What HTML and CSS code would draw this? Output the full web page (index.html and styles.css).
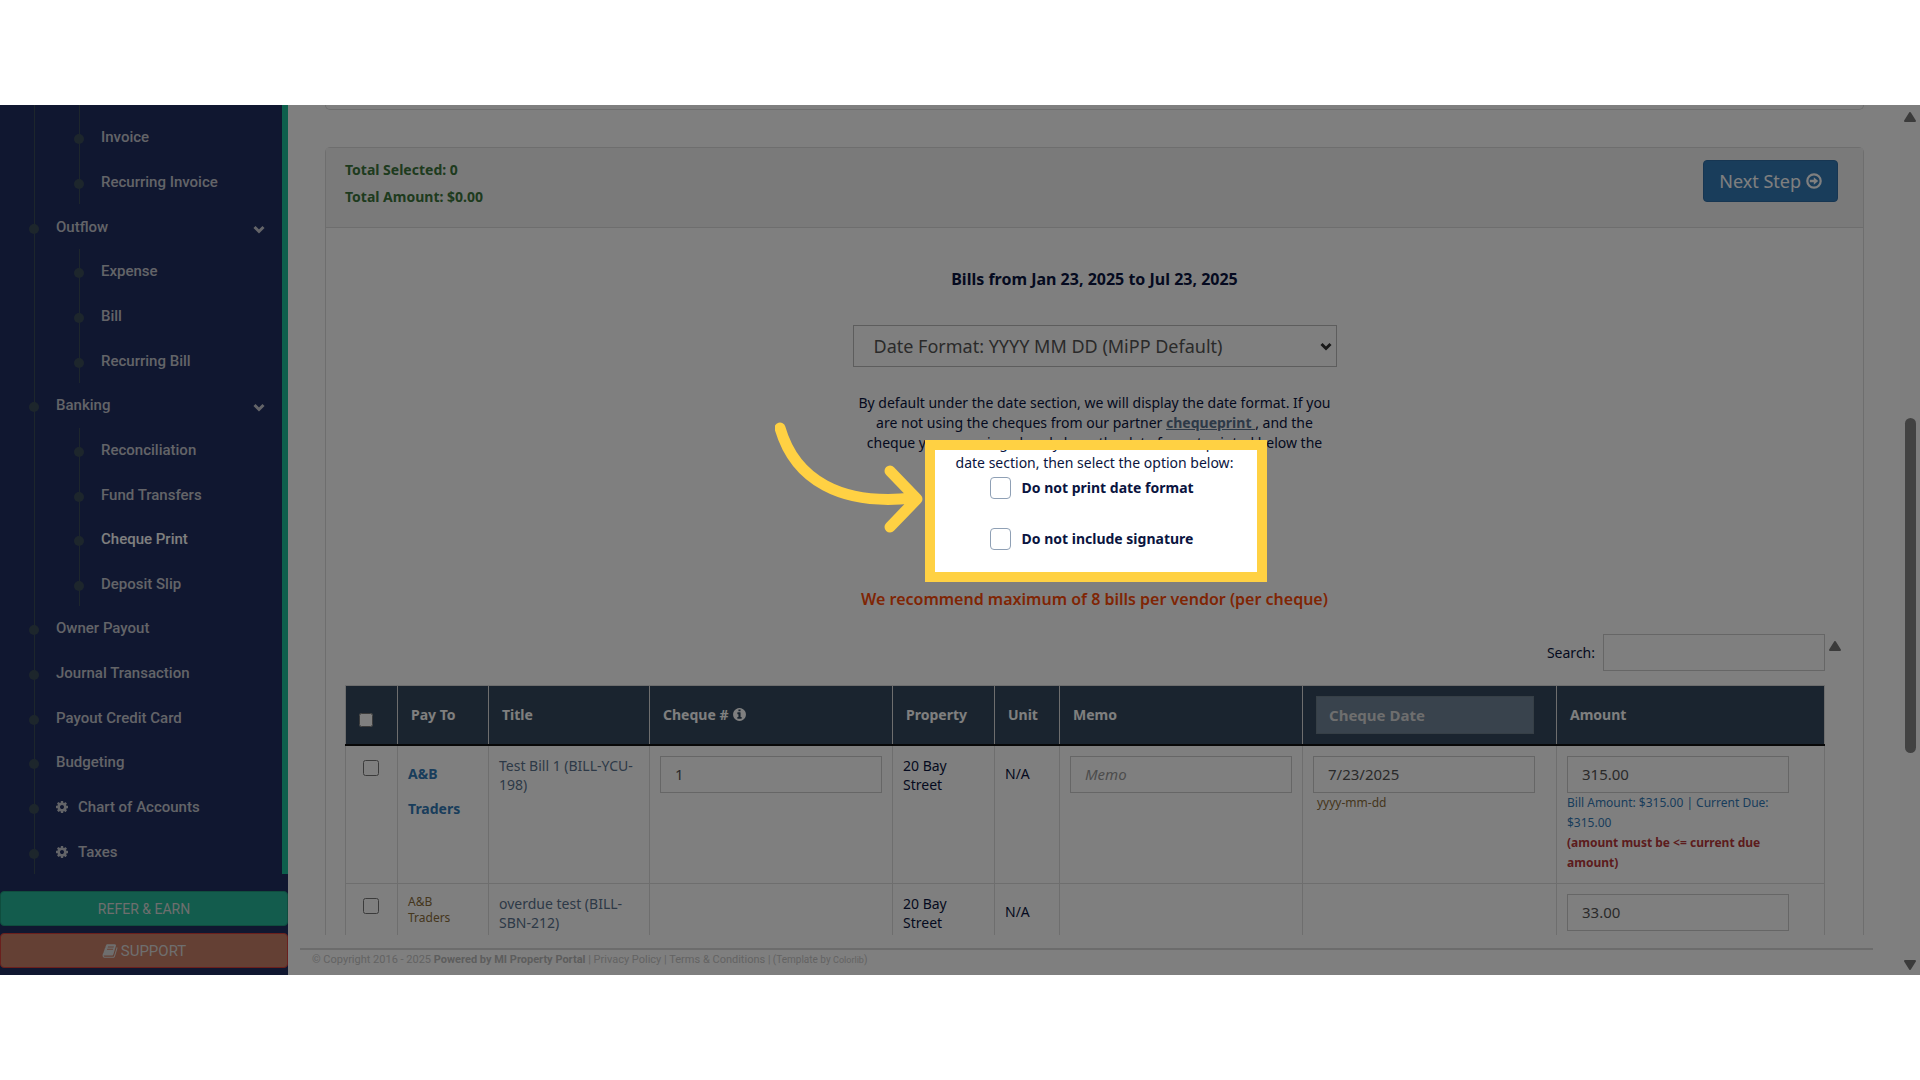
FILE: index.html
```html
<!DOCTYPE html>
<html lang="en">
<head>
<meta charset="utf-8">
<title>Cheque Print</title>
<link rel="stylesheet" href="styles.css">
</head>
<body>
<svg class="sprite" aria-hidden="true">
  <symbol id="cog" viewBox="0 0 1792 1792"><path d="M1152 896q0-106-75-181t-181-75-181 75-75 181 75 181 181 75 181-75 75-181zm512-109v222q0 12-8 23t-20 13l-185 28q-19 54-39 91 35 50 107 138 10 12 10 25t-9 23q-27 37-99 108t-94 71q-12 0-26-9l-138-108q-44 23-91 38-16 136-29 186-7 28-36 28h-222q-14 0-24.5-8.5t-11.5-21.5l-28-184q-49-16-90-37l-141 107q-10 9-25 9-14 0-25-11-126-114-165-168-7-10-7-23 0-12 8-23 15-21 51-66.5t54-70.5q-27-50-41-99l-183-27q-13-2-21-12.5t-8-23.5v-222q0-12 8-23t19-13l186-28q14-46 39-92-40-57-107-138-10-12-10-24 0-10 9-23 26-36 98.5-107.5t94.5-71.5q13 0 26 10l138 107q44-23 91-38 16-136 29-186 7-28 36-28h222q14 0 24.5 8.5t11.5 21.5l28 184q49 16 90 37l142-107q9-9 24-9 13 0 25 10 129 119 165 170 7 8 7 22 0 12-8 23-15 21-51 66.5t-54 70.5q26 50 41 98l183 28q13 2 21 12.5t8 23.5z"/></symbol>
  <symbol id="chevron" viewBox="0 0 14 14"><path d="M2.5 5l4.5 4.5L11.500 5" fill="none" stroke="currentColor" stroke-width="3"/></symbol>
</svg>
<div class="app">
  <aside class="sidebar">
    <nav class="menu">
      <ul class="menu-list">
        <li class="group two"><ul class="sub">
          <li><a href="#">Invoice</a></li>
          <li><a href="#">Recurring Invoice</a></li>
        </ul></li>
        <li class="item"><a href="#">Outflow <svg class="chev"><use href="#chevron"/></svg></a></li>
        <li class="group three"><ul class="sub">
          <li><a href="#">Expense</a></li>
          <li><a href="#">Bill</a></li>
          <li><a href="#">Recurring Bill</a></li>
        </ul></li>
        <li class="item"><a href="#">Banking <svg class="chev"><use href="#chevron"/></svg></a></li>
        <li class="group four"><ul class="sub">
          <li><a href="#">Reconciliation</a></li>
          <li><a href="#">Fund Transfers</a></li>
          <li><a class="current" href="#">Cheque Print</a></li>
          <li><a href="#">Deposit Slip</a></li>
        </ul></li>
        <li class="item"><a href="#">Owner Payout</a></li>
        <li class="item"><a href="#">Journal Transaction</a></li>
        <li class="item"><a href="#">Payout Credit Card</a></li>
        <li class="item"><a href="#">Budgeting</a></li>
        <li class="item"><a href="#"><svg class="cog"><use href="#cog"/></svg>Chart of Accounts</a></li>
        <li class="item"><a href="#"><svg class="cog"><use href="#cog"/></svg>Taxes</a></li>
      </ul>
    </nav>
    <div class="side-actions">
      <button class="side-btn refer" type="button">REFER &amp; EARN</button>
      <button class="side-btn support" type="button"><svg class="book" viewBox="0 0 1792 1792"><path d="M1703 478q40 57 18 129l-275 906q-19 64-76.5 107.500t-122.500 43.500h-923q-77 0-148.500-53.500t-99.500-131.500q-24-67-2-127 0-4 3-27t4-37q1-8-3-21.500t-3-19.500q2-11 8-21t16.500-23.500 16.500-23.500q23-38 45-91.500t30-91.500q3-10 .5-30t-.5-28q3-11 17-28t17-23q21-36 42-92t25-90q1-9-2.500-32t.5-28q4-13 22-30.500t22-22.500q19-26 42.500-84.500t27.500-96.500q1-8-3-25.500t-2-26.500q2-8 9-18t18-23 17-21q8-12 16.500-30.500t15-35 16-36 19.500-32 26.500-23.500 36-11.500 47.500 5.500l-1 3q38-9 51-9h761q74 0 114 56t18 130l-274 906q-36 119-71.500 153.500t-128.500 34.500h-869q-27 0-38 15-11 16-1 43 24 70 144 70h923q29 0 56-15.500t35-41.500l300-987q7-22 5-57 38 15 59 43zm-1064 2q-4 13 2 22.500t20 9.500h608q13 0 25.500-9.500t16.500-22.500l21-64q4-13-2-22.500t-20-9.500h-608q-13 0-25.500 9.500t-16.500 22.500zm-83 256q-4 13 2 22.500t20 9.500h608q13 0 25.500-9.500t16.500-22.500l21-64q4-13-2-22.500t-20-9.500h-608q-13 0-25.500 9.500t-16.500 22.500z"/></svg>SUPPORT</button>
    </div>
  </aside>

  <main class="main">
    <div class="content">
      <section class="panel panel-end"></section>
      <section class="panel">
        <header class="panel-head">
          <div class="totals">
            <div>Total Selected: 0</div>
            <div>Total Amount: $0.00</div>
          </div>
          <button class="next" type="button">Next Step
            <svg class="next-icon" viewBox="0 0 16 16"><circle cx="8" cy="8" r="6.700" fill="none" stroke="currentColor" stroke-width="2.200"/><path d="M3.800 6.800h4V4.200L12.200 8l-4.400 3.800V9.200h-4z"/></svg>
          </button>
        </header>
        <div class="panel-body">
          <h4 class="title">Bills from Jan 23, 2025 to Jul 23, 2025</h4>
          <div class="setup">
            <div class="select-wrap">
              <select class="format" aria-label="Date format"><option>Date Format: YYYY MM DD (MiPP Default)</option></select>
              <svg class="select-arrow"><use href="#chevron"/></svg>
            </div>
            <p class="hint">By default under the date section, we will display the date format. If you<br>are not using the cheques from our partner <a href="#">chequeprint </a>, and the<br>cheque you are using already have the date format printed below the<br>date section, then select the option below:</p>
            <label class="option"><input type="checkbox">Do not print date format</label>
            <label class="option"><input type="checkbox">Do not include signature</label>
          </div>
          <p class="advice">We recommend maximum of 8 bills per vendor (per cheque)</p>
          <div class="bills">
            <div class="bills-area">
              <div class="search"><label for="q">Search:</label><input class="field" id="q" type="text"></div>
              <table class="table">
                <colgroup><col class="c-check"><col class="c-pay"><col class="c-title"><col class="c-field"><col class="c-prop"><col class="c-unit"><col class="c-field"><col class="c-date"><col></colgroup>
                <thead>
                  <tr>
                    <th class="pick"><input type="checkbox" aria-label="Select all"></th>
                    <th>Pay To</th><th>Title</th>
                    <th>Cheque # <svg class="info" viewBox="0 0 1792 1792"><path d="M1152 1376v-160q0-14-9-23t-23-9h-96v-512q0-14-9-23t-23-9h-320q-14 0-23 9t-9 23v160q0 14 9 23t23 9h96v320h-96q-14 0-23 9t-9 23v160q0 14 9 23t23 9h448q14 0 23-9t9-23zm-128-896v-160q0-14-9-23t-23-9h-192q-14 0-23 9t-9 23v160q0 14 9 23t23 9h192q14 0 23-9t9-23zm640 416q0 209-103 385.500t-279.500 279.500-385.500 103-385.500-103-279.500-279.500-103-385.500 103-385.500 279.500-279.500 385.500-103 385.500 103 279.500 279.500 103 385.500z"/></svg></th>
                    <th>Property</th><th>Unit</th><th>Memo</th>
                    <th><input class="head-date" type="text" placeholder="Cheque Date" aria-label="Cheque Date"></th>
                    <th>Amount</th>
                  </tr>
                </thead>
                <tbody>
                  <tr>
                    <td class="pick"><input type="checkbox" aria-label="Select Test Bill 1"></td>
                    <td><a class="payee" href="#">A&amp;B Traders</a></td>
                    <td class="bill">Test Bill 1 (BILL-YCU-198)</td>
                    <td><input class="field" type="text" value="1" aria-label="Cheque number"></td>
                    <td>20 Bay Street</td>
                    <td class="unit">N/A</td>
                    <td><input class="field memo" type="text" placeholder="Memo" aria-label="Memo"></td>
                    <td><input class="field" type="text" value="7/23/2025" aria-label="Cheque date"><div class="note format-note">yyyy-mm-dd</div></td>
                    <td><input class="field" type="text" value="315.00" aria-label="Amount"><div class="note due">Bill Amount: $315.00 | Current Due: $315.00</div><div class="note limit">(amount must be &lt;= current due amount)</div></td>
                  </tr>
                  <tr>
                    <td class="pick"><input type="checkbox" aria-label="Select overdue test"></td>
                    <td><div class="payee-plain">A&amp;B<br>Traders</div></td>
                    <td class="bill">overdue test (BILL-SBN-212)</td>
                    <td></td>
                    <td>20 Bay Street</td>
                    <td class="unit">N/A</td>
                    <td></td>
                    <td></td>
                    <td><input class="field" type="text" value="33.00" aria-label="Amount"><div class="note due">Bill Amount: $33.00 | Current Due: $33.00</div></td>
                  </tr>
                </tbody>
              </table>
            </div>
            <div class="inner-scroll"><svg class="tri" viewBox="0 0 12 10"><path d="M6 1l5 8H1z" stroke="currentColor" stroke-width="2" stroke-linejoin="round"/></svg></div>
          </div>
        </div>
      </section>
    </div>
    <footer class="footer">© Copyright 2016 - 2025 <b>Powered by MI Property Portal</b> | <a href="#">Privacy Policy</a> | <a href="#">Terms &amp; Conditions</a> <small>| (Template by <a class="tiny" href="#">Colorlib</a>)</small></footer>
  </main>

  <div class="page-scroll">
    <svg class="tri" viewBox="0 0 12 10"><path d="M6 1l5 8H1z" stroke="currentColor" stroke-width="2" stroke-linejoin="round"/></svg>
    <div class="track"><div class="thumb"></div></div>
    <svg class="tri" viewBox="0 0 12 10"><path d="M6 9l5-8H1z" stroke="currentColor" stroke-width="2" stroke-linejoin="round"/></svg>
  </div>

  <div class="spotlight">
    <svg class="pointer" viewBox="0 0 150 120"><path d="M5 12C20 64 66 90 138 82M115 55L142 83L115 111" fill="none" stroke="#ffd143" stroke-width="11" stroke-linecap="round" stroke-linejoin="round"/></svg>
  </div>
</div>
</body>
</html>
```
FILE: styles.css
```css
:root {
  --text: "Noto Sans", "Open Sans", sans-serif;
  --ui: "Roboto", "Liberation Sans", sans-serif;
}
* { box-sizing: border-box; }
body {
  margin: 0;
  height: 100vh;
  padding: 105px 0;
  background: #fff;
  font: 14px/20px var(--text);
  color: #0a1440;
}
ul { list-style: none; margin: 0; padding: 0; }
a { color: inherit; text-decoration: none; }
input, select, button { font: inherit; color: inherit; margin: 0; }
svg { fill: currentColor; flex: none; }
.sprite { display: none; }

.app {
  position: relative;
  display: flex;
  height: 100%;
  overflow: hidden;
}

/* Sidebar */
.sidebar {
  width: 288px;
  flex: none;
  display: flex;
  flex-direction: column;
  background: #202e60;
  font-family: var(--ui);
  font-size: 15px;
  font-weight: 500;
  color: #c6c8d0;
}
.menu {
  flex: 1;
  min-height: 0;
  display: flex;
  padding-top: 10px;
  border-right: 6px solid #1abf99;
  background: linear-gradient(#3a4c58, #3a4c58) 34px 0 / 1px 100% no-repeat;
}
.menu-list { flex: 1; display: flex; flex-direction: column; }
.item { flex: 1; display: flex; }
.group { display: flex; padding-left: 79px; }
.two { flex: 2; }
.three { flex: 3; }
.four { flex: 4; }
.sub { flex: 1; display: flex; flex-direction: column; border-left: 1px solid #3a4c58; }
.two .sub { margin-top: -10px; padding-top: 10px; }
.sub li { flex: 1; display: flex; }
.menu a { flex: 1; display: flex; align-items: center; }
.menu a::before {
  content: "";
  width: 10px;
  height: 10px;
  margin: 4px 17px 0 29px;
  border-radius: 50%;
  background: #3a4c58;
}
.sub a::before { margin-left: -6px; }
.menu .current { color: #fff; }
.chev { width: 14px; height: 14px; margin: 4px 16px 0 auto; }
.cog { width: 14px; height: 14px; margin: 0 9px 0 -1px; }
.side-actions { display: flex; flex-direction: column; gap: 7px; padding: 17px 0 7px; }
.side-btn {
  display: flex;
  align-items: center;
  justify-content: center;
  gap: 3px;
  height: 35px;
  border: 1px solid #1f9a7d;
  border-radius: 4px;
  background: #26b99a;
  color: #ddd;
  font-weight: 400;
}
.refer { font-size: 14px; }
.support { background: #c98068; border-color: #d43f3a; }
.book { width: 16px; height: 16px; }

/* Main column */
.main { flex: 1; min-width: 0; display: flex; flex-direction: column; padding-left: 12px; }
.content { flex: 1; min-height: 0; overflow: hidden; padding: 0 36px 0 25px; }
.panel { border: 1px solid #ddd; border-radius: 5px; }
.panel-end { height: 5px; margin-bottom: 37px; border-top: 0; border-radius: 0 0 5px 5px; }
.panel-head {
  display: flex;
  justify-content: space-between;
  align-items: flex-start;
  height: 80px;
  padding: 12px 25px 12px 19px;
  background: #f4f4f4;
  border-bottom: 1px solid #ddd;
}
.totals { color: #3c763d; font-weight: 700; line-height: 27px; margin-top: -4px; }
.next {
  display: flex;
  align-items: center;
  gap: 5px;
  height: 42px;
  padding: 0 15px;
  border: 1px solid #2e6da4;
  border-radius: 4px;
  background: #337ab7;
  color: #fff;
  font-size: 18px;
}
.next-icon { width: 16px; height: 16px; }
.panel-body { padding: 40px 19px 20px; }
.title { margin: 0 0 35px; font-size: 16px; font-weight: 700; line-height: 22px; text-align: center; }
.setup { width: 484px; margin: 0 auto; }
.select-wrap { display: grid; align-items: center; }
.format {
  grid-area: 1 / 1;
  appearance: none;
  width: 100%;
  height: 42px;
  padding: 0 20px;
  border: 1px solid #bbb;
  border-radius: 0;
  background: #fff;
  color: #555;
  font-size: 18px;
}
.select-arrow { grid-area: 1 / 1; justify-self: end; width: 14px; height: 14px; margin-right: 4px; color: #333; pointer-events: none; }
.hint { margin: 26px 0 4px; text-align: center; white-space: nowrap; }
.hint a { font-weight: 700; color: #5a738e; text-decoration: underline; }
.option {
  display: flex;
  align-items: center;
  gap: 11px;
  height: 22px;
  margin: 0 0 29px 137px;
  font-weight: 700;
}
.option input {
  appearance: none;
  width: 21px;
  height: 22px;
  border: 1px solid #8fa0b5;
  border-radius: 4px;
  background: #fff;
}
.advice { margin: 39px 0 25px; color: #ff4a08; font-size: 16px; font-weight: 600; text-align: center; }
.bills { display: flex; }
.bills-area { flex: 1; min-width: 0; }
.search { display: flex; align-items: center; justify-content: flex-end; gap: 8px; margin-bottom: 14px; }
.field {
  display: block;
  width: 222px;
  height: 37px;
  padding: 0 14px;
  border: 1px solid #ccc;
  border-radius: 0;
  background: #fff;
  color: #555;
  font-size: 15px;
}
.memo::placeholder { color: #999; font-style: italic; }
.table { width: 100%; table-layout: fixed; border-collapse: collapse; }
.c-check { width: 52px; }
.c-pay { width: 91px; }
.c-title { width: 161px; }
.c-field { width: 243px; }
.c-prop { width: 102px; }
.c-unit { width: 65px; }
.c-date { width: 254px; }
.table th {
  height: 59px;
  padding: 0 13px;
  border: 1px solid #ddd;
  border-bottom: 2px solid #111;
  background: #34495e;
  color: #fff;
  font-weight: 700;
  text-align: left;
}
.table td { padding: 10px; border: 1px solid #ddd; vertical-align: top; line-height: 19px; }
.table th.pick input { display: block; width: 14px; height: 14px; margin: 10px 0 0; }
.table td.pick { padding: 14px 17px; }
.table td.pick input { display: block; width: 16px; height: 16px; }
.info { width: 15px; height: 15px; vertical-align: -2px; }
.head-date { display: block; width: 218px; height: 38px; padding: 0 12px; border: 1px solid #6d7e8c; background: #72869a; font-size: 15px; font-weight: 700; }
.head-date::placeholder { color: #ddd; }
.payee { display: block; color: #337ab7; font-weight: 700; line-height: 35px; }
.payee-plain { color: #8a6d3b; font-size: 12px; line-height: 16px; }
.bill { color: #5a738e; }
.table .unit { line-height: 35px; }
.note { max-width: 222px; font-size: 12px; line-height: 20px; }
.format-note { color: #8a6d3b; padding-left: 4px; }
.due { color: #337ab7; }
.limit { color: #b8383a; font-weight: 700; }
.inner-scroll { width: 19px; display: flex; justify-content: center; padding-top: 7px; color: #777; }
.tri { width: 12px; height: 10px; }

.footer {
  margin: 13px 27px 0 0;
  padding: 0 12px;
  height: 27px;
  border-top: 2px solid #d9d9d9;
  color: #c6c6c6;
  font: 11px/20px var(--ui);
}
.footer b { color: #bbb; }
.footer small { font-size: 10px; }
.tiny { font-size: 9px; }

.page-scroll {
  width: 20px;
  flex: none;
  display: flex;
  flex-direction: column;
  align-items: center;
  padding: 7px 0 5px;
  background: #fcfcfc;
  color: #777;
}
.track { flex: 1; display: flex; }
.thumb { width: 11px; height: 335px; margin-top: 296px; border-radius: 6px; background: #858585; }

/* Guided-tour highlight that dims everything around the options */
.spotlight {
  position: absolute;
  left: calc(50% - 35px);
  top: 335px;
  width: 342px;
  height: 142px;
  border: 10px solid #ffd143;
  box-shadow: 0 0 0 3000px rgba(0, 0, 0, .5);
  pointer-events: none;
}
.pointer { position: absolute; right: 100%; top: -34px; width: 150px; height: 120px; margin-right: 10px; }
```
